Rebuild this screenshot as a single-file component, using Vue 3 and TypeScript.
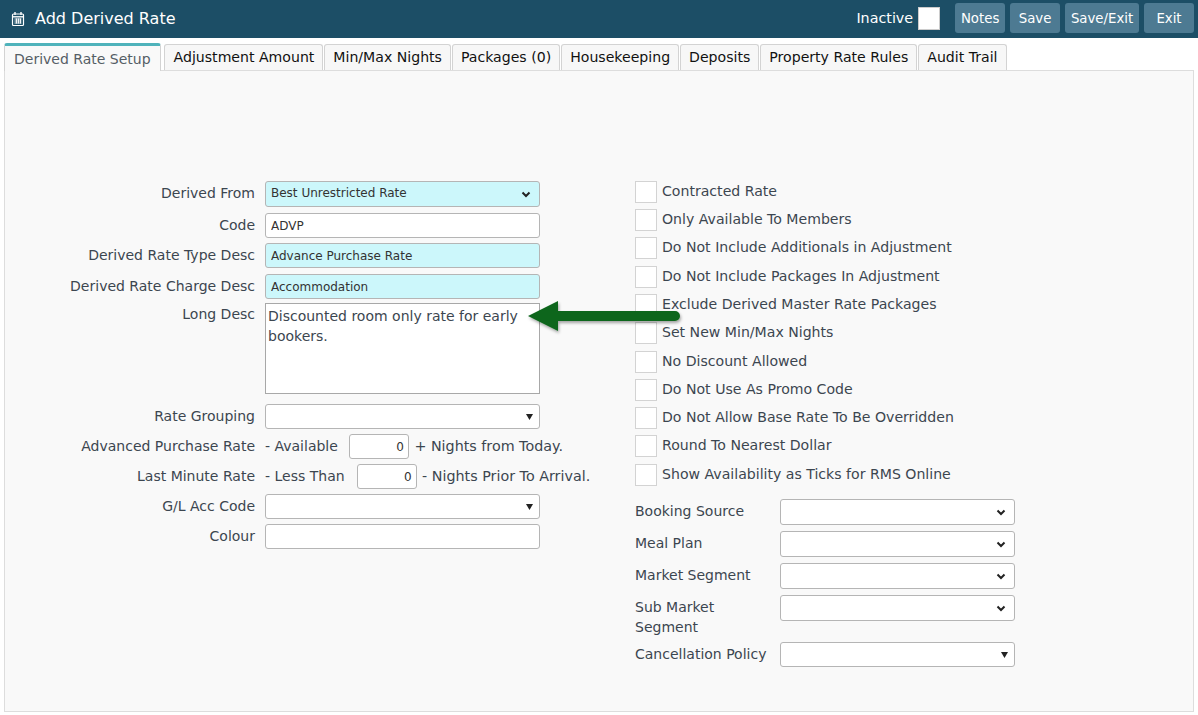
<script setup lang="ts">
const tabs: string[] = ['Adjustment Amount', 'Min/Max Nights', 'Packages (0)', 'Housekeeping', 'Deposits', 'Property Rate Rules', 'Audit Trail']
const buttons: string[] = ['Notes', 'Save', 'Save/Exit', 'Exit']
const checks: string[] = [
  'Contracted Rate',
  'Only Available To Members',
  'Do Not Include Additionals in Adjustment',
  'Do Not Include Packages In Adjustment',
  'Exclude Derived Master Rate Packages',
  'Set New Min/Max Nights',
  'No Discount Allowed',
  'Do Not Use As Promo Code',
  'Do Not Allow Base Rate To Be Overridden',
  'Round To Nearest Dollar',
  'Show Availability as Ticks for RMS Online'
]
const rightSelects: string[] = ['Booking Source', 'Meal Plan', 'Market Segment', 'Sub Market Segment']
</script>

<template>
  <div class="page">
    <header class="topbar">
      <div class="title">
        <svg class="cal" width="14" height="16" viewBox="0 0 14 16" fill="none" stroke="#fff">
          <rect x="1.5" y="3" width="11" height="11.5" rx="1" stroke-width="1.2" />
          <path d="M4 1v3M10 1v3" stroke-width="1.4" />
          <path d="M1.5 5.8h11" stroke-width="1.4" />
          <path d="M3.5 8h7M3.5 10h7M3.5 12h7M5.5 7.5v5M7.5 7.5v5M9.500 7.5v5" stroke-width="0.9" />
        </svg>
        <h1>Add Derived Rate</h1>
      </div>
      <div class="actions">
        <label class="inactive">Inactive<input type="checkbox" class="inactive-box" /></label>
        <button v-for="b in buttons" :key="b" class="btn" type="button">{{ b }}</button>
      </div>
    </header>

    <nav class="tabs">
      <span class="tab active">Derived Rate Setup</span>
      <span v-for="t in tabs" :key="t" class="tab">{{ t }}</span>
    </nav>

    <main class="panel">
      <section class="col-left">
        <div class="row r-first">
          <label class="lbl">Derived From</label>
          <div class="sel-wrap">
            <select class="ctl sel req tall"><option>Best Unrestricted Rate</option></select>
            <svg class="chev" width="10" height="7" viewBox="0 0 10 7"><path d="M1.500 1.500 5 5l3.500-3.500" fill="none" stroke="#222" stroke-width="2" /></svg>
          </div>
        </div>
        <div class="row r-code">
          <label class="lbl">Code</label>
          <input class="ctl" value="ADVP" />
        </div>
        <div class="row r-type">
          <label class="lbl">Derived Rate Type Desc</label>
          <input class="ctl req" value="Advance Purchase Rate" />
        </div>
        <div class="row r-charge">
          <label class="lbl">Derived Rate Charge Desc</label>
          <input class="ctl req" value="Accommodation" />
        </div>
        <div class="row r-long">
          <label class="lbl lbl-top">Long Desc</label>
          <textarea class="area">Discounted room only rate for early bookers.</textarea>
        </div>
        <div class="row r-group">
          <label class="lbl">Rate Grouping</label>
          <div class="sel-wrap">
            <select class="ctl sel"></select>
            <svg class="tri" width="7" height="6" viewBox="0 0 7 6"><path d="M0 0h7L3.500 6z" fill="#222" /></svg>
          </div>
        </div>
        <div class="row r-std">
          <label class="lbl">Advanced Purchase Rate</label>
          <span class="inline">- Available</span>
          <input class="ctl num num-a" value="0" />
          <span class="inline after">+ Nights from Today.</span>
        </div>
        <div class="row r-std">
          <label class="lbl">Last Minute Rate</label>
          <span class="inline">- Less Than</span>
          <input class="ctl num num-b" value="0" />
          <span class="inline after">- Nights Prior To Arrival.</span>
        </div>
        <div class="row r-std">
          <label class="lbl">G/L Acc Code</label>
          <div class="sel-wrap">
            <select class="ctl sel"></select>
            <svg class="tri" width="7" height="6" viewBox="0 0 7 6"><path d="M0 0h7L3.500 6z" fill="#222" /></svg>
          </div>
        </div>
        <div class="row r-std">
          <label class="lbl">Colour</label>
          <input class="ctl" />
        </div>
      </section>

      <section class="col-right">
        <div class="checks">
          <label v-for="c in checks" :key="c" class="check">
            <input type="checkbox" class="box" />
            <span class="check-text">{{ c }}</span>
          </label>
        </div>
        <div class="selects">
          <div v-for="s in rightSelects" :key="s" class="rs-row">
            <label class="rs-lbl">{{ s }}</label>
            <div class="sel-wrap rs-wrap">
              <select class="ctl sel tall"></select>
              <svg class="chev" width="10" height="7" viewBox="0 0 10 7"><path d="M1.500 1.500 5 5l3.500-3.500" fill="none" stroke="#222" stroke-width="2" /></svg>
            </div>
          </div>
          <div class="rs-row rs-last">
            <label class="rs-lbl">Cancellation Policy</label>
            <div class="sel-wrap rs-wrap">
              <select class="ctl sel"></select>
              <svg class="tri" width="7" height="6" viewBox="0 0 7 6"><path d="M0 0h7L3.500 6z" fill="#222" /></svg>
            </div>
          </div>
        </div>
      </section>

      <svg class="arrow" width="160" height="42" viewBox="0 0 160 42">
        <defs>
          <filter id="sh" x="-10%" y="-30%" width="120%" height="170%">
            <feDropShadow dx="1" dy="2" stdDeviation="1.500" flood-color="#000" flood-opacity="0.35" />
          </filter>
        </defs>
        <path d="M3 20 L33 5 V15 H150 a5 5 0 0 1 0 10 H33 V35 Z" fill="#0e661a" filter="url(#sh)" />
      </svg>
    </main>
  </div>
</template>

<style>
html, body { margin: 0; background: #fff; }
</style>

<style scoped>
.page {
  width: 1198px;
  height: 715px;
  overflow: hidden;
  background: #fff;
  font-family: "DejaVu Sans", Verdana, sans-serif;
  font-size: 14px;
  color: #3c4650;
  box-sizing: border-box;
}
.topbar {
  height: 38px;
  background: #1c4e66;
  display: flex;
  align-items: center;
  justify-content: space-between;
  padding: 0 4px 2px 11px;
  box-sizing: border-box;
}
.title { display: flex; align-items: center; gap: 10px; color: #fff; }
.title h1 { margin: 0; font-weight: 400; font-size: 16px; }
.cal { flex: none; position: relative; top: 1px; }
.actions { display: flex; align-items: center; gap: 5px; }
.inactive { display: flex; align-items: center; gap: 5px; color: #fff; font-size: 14.3px; margin-right: 10px; }
.inactive-box {
  appearance: none; margin: 0; width: 22px; height: 23px; background: #fff;
  border: 1px solid #ccc; box-sizing: border-box;
}
.btn {
  height: 30px; margin: 0; border: 0; border-radius: 3px; background: #4d7a92; color: #fff;
  font: 13.3px "DejaVu Sans", Verdana, sans-serif; padding: 0 5.8px; min-width: 50px;
}
.tabs {
  height: 33px; display: flex; align-items: flex-end; padding: 5px 0 0 4px; gap: 1px; margin-bottom: -1px;
  position: relative; z-index: 1; box-sizing: border-box;
}
.tab {
  box-sizing: border-box; height: 26px; display: flex; align-items: center; padding: 0 8px 2px;
  background: #f7f7f7; border: 1px solid #d3d3d3; border-bottom: 0; border-radius: 3px 3px 0 0;
  color: #111; font-size: 14.1px; white-space: nowrap; margin-bottom: 1px;
}
.tab:nth-child(2) { padding-left: 9px; }
.tab.active {
  height: 28px; background: #f9f9f9; border-top: 3px solid #4fb3bb; color: #555e66; font-size: 14px;
  margin-bottom: 0; margin-right: 2px; padding: 1px 9px 1px;
}
.panel {
  position: relative; margin: 0 4px; height: 642px; box-sizing: border-box;
  background: #f9f9f9; border: 1px solid #ddd;
  padding: 110px 0 0 0; display: flex;
}
.col-left { width: 630px; flex: none; display: flex; flex-direction: column; }
.row { display: flex; align-items: center; }
.row .lbl, .inline { position: relative; top: -1px; }
.r-first { height: 26px; }
.r-first .sel { padding-bottom: 2px; }
.r-code { height: 25px; margin-top: 6px; }
.r-type { height: 25px; margin-top: 5px; }
.r-charge { height: 25px; margin-top: 6px; }
.r-long { height: 91px; margin-top: 4px; align-items: flex-start; }
.r-group { height: 25px; margin-top: 10px; }
.r-std { height: 25px; margin-top: 5px; }
.lbl { width: 250px; flex: none; text-align: right; margin-right: 10px; white-space: nowrap; }
.row .lbl-top { top: 0; padding-top: 3px; }
.ctl {
  box-sizing: border-box; width: 275px; height: 25px; margin: 0; padding: 0 5px; background: #fff;
  border: 1px solid #b5b5b5; border-radius: 3px; color: #333;
  font: 12px "DejaVu Sans", Verdana, sans-serif; outline: none;
}
.req { background: #ccf7fb; }
.tall { height: 26px; }
.sel { appearance: none; display: block; }
.sel-wrap { position: relative; width: 275px; flex: none; }
.chev { position: absolute; right: 9px; top: 10px; pointer-events: none; }
.tri { position: absolute; right: 7px; top: 10px; pointer-events: none; }
.area {
  box-sizing: border-box; width: 275px; height: 91px; margin: 0; padding: 2px; background: #fff;
  border: 1px solid #a8a8a8; border-radius: 0; resize: none; outline: none; color: #3c4650;
  font: 14px/20px "DejaVu Sans", Verdana, sans-serif;
}
.inline { white-space: nowrap; }
.after { margin-left: 5.5px; font-size: 14.3px; }
.num { text-align: right; padding-right: 4px; }
.num-a { width: 60px; margin-left: 11px; }
.num-b { width: 60px; margin-left: 12px; }
.col-right { display: flex; flex-direction: column; }
.checks { display: flex; flex-direction: column; gap: 6.3px; margin-top: -0.2px; }
.check { display: flex; align-items: center; gap: 5px; height: 22px; white-space: nowrap; }
.check-text { position: relative; top: -1px; font-size: 14.1px; }
.box {
  appearance: none; margin: 0; width: 22px; height: 22px; box-sizing: border-box;
  background: #fff; border: 1px solid #d3d3d3; flex: none;
}
.selects { display: flex; flex-direction: column; gap: 6px; margin-top: 13.5px; }
.rs-row { display: flex; align-items: flex-start; }
.rs-lbl { width: 145px; flex: none; line-height: 20px; padding-top: 2px; padding-right: 5px; box-sizing: border-box; }
.rs-wrap { width: 235px; }
.rs-wrap .ctl { width: 235px; }
.rs-last { margin-top: -1px; }
.arrow { position: absolute; left: 520px; top: 225px; overflow: visible; }
</style>
